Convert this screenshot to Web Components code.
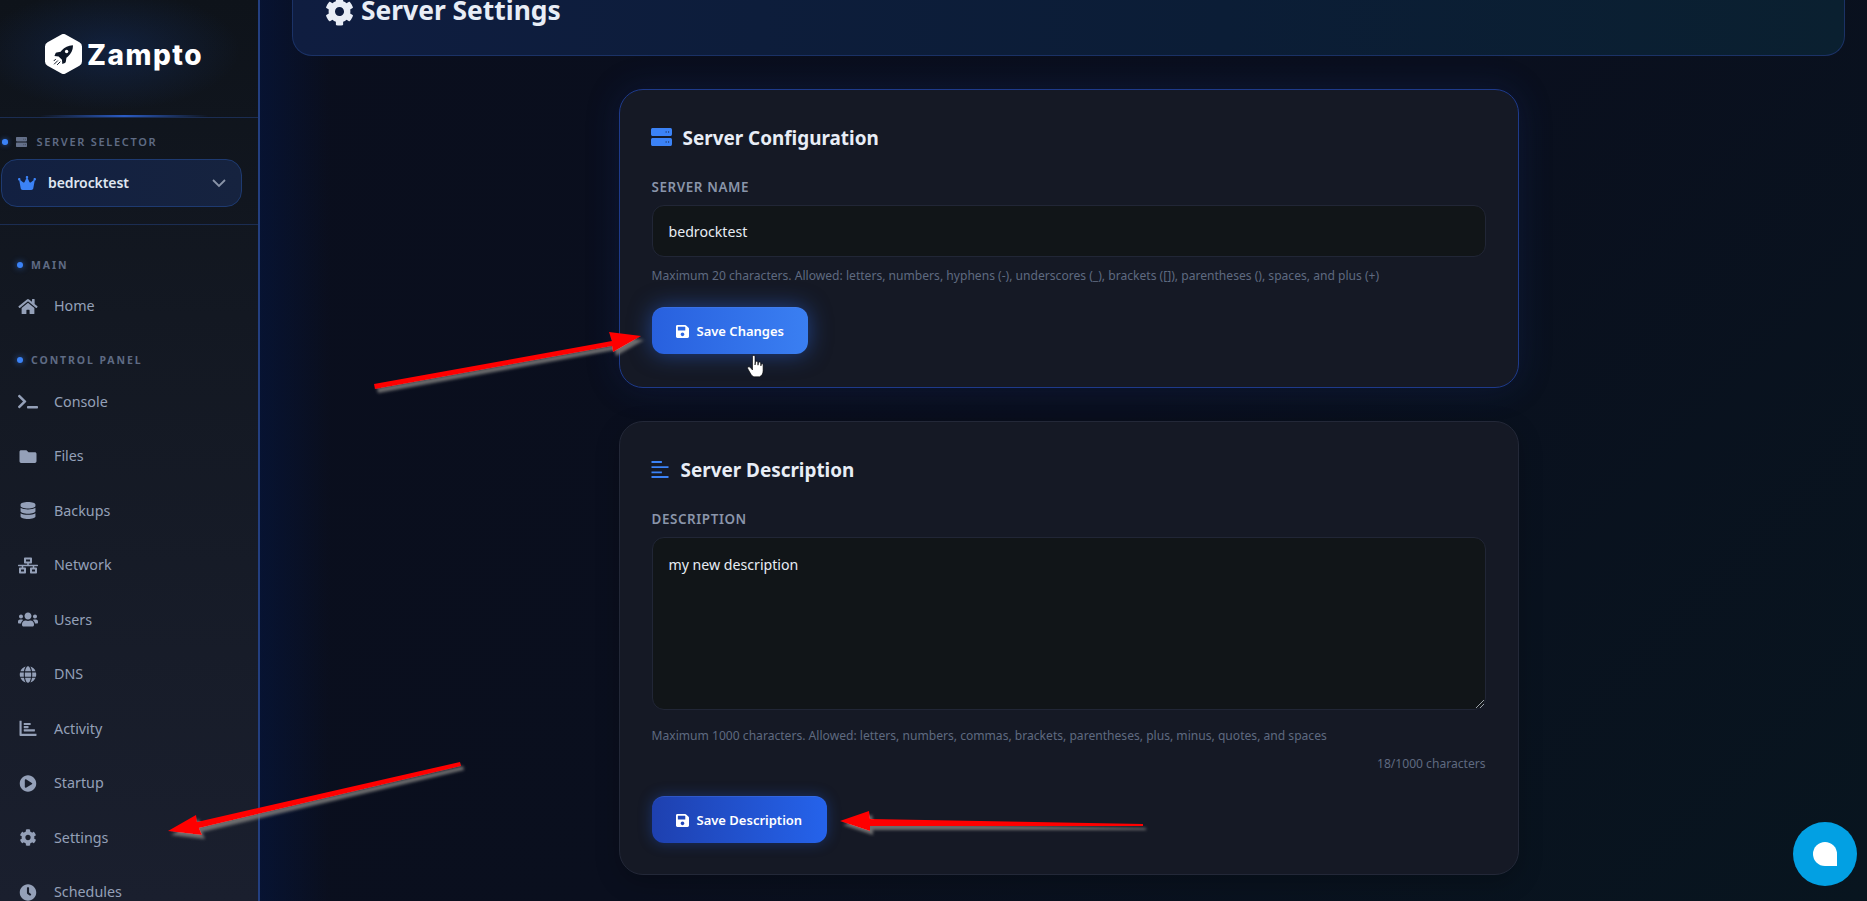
<!DOCTYPE html>
<html lang="en">
<head>
<meta charset="utf-8">
<title>Server Settings</title>
<style>
html,body{margin:0;padding:0;height:901px;overflow:hidden;background:#0a0f1c;font-family:"Noto Sans","Open Sans",sans-serif;}
</style>
</head>
<body>
<app-shell>
  <side-bar>
    <brand-logo></brand-logo>
    <server-picker name="bedrocktest"></server-picker>
    <nav-section label="MAIN" first>
      <nav-item icon="home">Home</nav-item>
    </nav-section>
    <nav-section label="CONTROL PANEL">
      <nav-item icon="terminal">Console</nav-item>
      <nav-item icon="folder">Files</nav-item>
      <nav-item icon="database">Backups</nav-item>
      <nav-item icon="network">Network</nav-item>
      <nav-item icon="users">Users</nav-item>
      <nav-item icon="globe">DNS</nav-item>
      <nav-item icon="chart">Activity</nav-item>
      <nav-item icon="play">Startup</nav-item>
      <nav-item icon="cog">Settings</nav-item>
      <nav-item icon="clock">Schedules</nav-item>
    </nav-section>
  </side-bar>
  <main-area>
    <page-header>Server Settings</page-header>
    <settings-card heading="Server Configuration" icon="server" hovered>
      <form-label>SERVER NAME</form-label>
      <text-box>bedrocktest</text-box>
      <form-hint>Maximum 20 characters. Allowed: letters, numbers, hyphens (-), underscores (_), brackets ([]), parentheses (), spaces, and plus (+)</form-hint>
      <save-button hovered>Save Changes</save-button>
    </settings-card>
    <settings-card heading="Server Description" icon="lines">
      <form-label>DESCRIPTION</form-label>
      <text-box multiline>my new description</text-box>
      <form-hint class="after-area">Maximum 1000 characters. Allowed: letters, numbers, commas, brackets, parentheses, plus, minus, quotes, and spaces</form-hint>
      <form-hint class="count">18/1000 characters</form-hint>
      <save-button>Save Description</save-button>
    </settings-card>
  </main-area>
  <annotation-layer></annotation-layer>
  <chat-bubble></chat-bubble>
</app-shell>

<script>
const ICONS = {
  home:['0 0 576 512','M280.37 148.26L96 300.11V464a16 16 0 0 0 16 16l112.06-.29a16 16 0 0 0 15.92-16V368a16 16 0 0 1 16-16h64a16 16 0 0 1 16 16v95.64a16 16 0 0 0 16 16.05L464 480a16 16 0 0 0 16-16V300L295.67 148.26a12.19 12.19 0 0 0-15.3 0zM571.6 251.47L488 182.56V44.05a12 12 0 0 0-12-12h-56a12 12 0 0 0-12 12v72.61L318.47 43a48 48 0 0 0-61 0L4.34 251.47a12 12 0 0 0-1.6 16.9l25.5 31A12 12 0 0 0 45.15 301l235.22-193.74a12.19 12.19 0 0 1 15.3 0L530.9 301a12 12 0 0 0 16.9-1.6l25.5-31a12 12 0 0 0-1.7-16.93z'],
  terminal:['0 0 640 512','M257.981 272.971L63.638 467.314c-9.373 9.373-24.569 9.373-33.941 0L7.029 444.647c-9.357-9.357-9.375-24.522-.04-33.901L161.011 256 6.99 101.255c-9.335-9.379-9.317-24.544.04-33.901l22.667-22.667c9.373-9.373 24.569-9.373 33.941 0L257.981 239.03c9.373 9.372 9.373 24.568 0 33.941zM640 456v-32c0-13.255-10.745-24-24-24H312c-13.255 0-24 10.745-24 24v32c0 13.255 10.745 24 24 24h304c13.255 0 24-10.745 24-24z'],
  folder:['0 0 512 512','M464 128H272l-64-64H48C21.49 64 0 85.49 0 112v288c0 26.51 21.49 48 48 48h416c26.51 0 48-21.49 48-48V176c0-26.51-21.49-48-48-48z'],
  database:['0 0 448 512','M448 73.143v45.714C448 159.143 347.667 192 224 192S0 159.143 0 118.857V73.143C0 32.857 100.333 0 224 0s224 32.857 224 73.143zM448 176v102.857C448 319.143 347.667 352 224 352S0 319.143 0 278.857V176c48.125 33.143 136.208 48.572 224 48.572S399.874 209.143 448 176zm0 160v102.857C448 479.143 347.667 512 224 512S0 479.143 0 438.857V336c48.125 33.143 136.208 48.572 224 48.572S399.874 369.143 448 336z'],
  network:['0 0 640 512','M640 264v-16c0-8.84-7.16-16-16-16H344v-40h72c17.67 0 32-14.33 32-32V32c0-17.67-14.33-32-32-32H224c-17.67 0-32 14.33-32 32v128c0 17.67 14.33 32 32 32h72v40H16c-8.84 0-16 7.16-16 16v16c0 8.84 7.16 16 16 16h104v40H64c-17.67 0-32 14.33-32 32v128c0 17.67 14.33 32 32 32h160c17.67 0 32-14.33 32-32V352c0-17.67-14.33-32-32-32h-56v-40h304v40h-56c-17.67 0-32 14.33-32 32v128c0 17.67 14.33 32 32 32h160c17.67 0 32-14.33 32-32V352c0-17.67-14.33-32-32-32h-56v-40h104c8.84 0 16-7.16 16-16zM256 128V64h128v64H256zm-64 320H96v-64h96v64zm352 0h-96v-64h96v64z'],
  users:['0 0 640 512','M96 224c35.3 0 64-28.7 64-64s-28.7-64-64-64-64 28.7-64 64 28.7 64 64 64zm448 0c35.3 0 64-28.7 64-64s-28.7-64-64-64-64 28.7-64 64 28.7 64 64 64zm32 32h-64c-17.6 0-33.5 7.1-45.1 18.6 40.3 22.1 68.9 62 75.1 109.4h66c17.7 0 32-14.3 32-32v-32c0-35.3-28.7-64-64-64zm-256 0c61.9 0 112-50.1 112-112S381.9 32 320 32 208 82.1 208 144s50.1 112 112 112zm76.8 32h-8.3c-20.8 10-43.9 16-68.5 16s-47.6-6-68.5-16h-8.3C179.6 288 128 339.6 128 403.2V432c0 26.5 21.5 48 48 48h288c26.5 0 48-21.5 48-48v-28.8c0-63.6-51.6-115.2-115.2-115.2zm-223.7-13.4C161.5 263.1 145.6 256 128 256H64c-35.3 0-64 28.7-64 64v32c0 17.7 14.3 32 32 32h65.9c6.3-47.4 34.9-87.3 75.2-109.4z'],
  globe:['0 0 496 512','M336.5 160C322 70.7 287.8 8 248 8s-74 62.7-88.5 152h177zM152 256c0 22.2 1.2 43.5 3.3 64h185.3c2.1-20.5 3.3-41.8 3.3-64s-1.2-43.5-3.3-64H155.3c-2.1 20.5-3.3 41.8-3.3 64zm324.7-96c-28.6-67.9-86.5-120.4-158-141.6 24.4 33.8 41.2 84.7 50 141.6h108zM177.2 18.4C105.8 39.6 47.8 92.1 19.3 160h108c8.7-56.9 25.5-107.8 49.9-141.6zM487.4 192H372.7c2.1 21 3.3 42.5 3.3 64s-1.2 43-3.3 64h114.6c5.5-20.5 8.6-41.8 8.6-64s-3.1-43.5-8.5-64zM120 256c0-21.5 1.2-43 3.3-64H8.6C3.2 212.5 0 233.8 0 256s3.2 43.5 8.6 64h114.6c-2-21-3.2-42.5-3.2-64zm39.5 96c14.5 89.3 48.7 152 88.5 152s74-62.7 88.5-152h-177zm159.3 141.6c71.4-21.2 129.4-73.7 158-141.6h-108c-8.8 56.9-25.6 107.8-50 141.6zM19.3 352c28.6 67.9 86.5 120.4 158 141.6-24.4-33.8-41.2-84.7-50-141.6h-108z'],
  chart:['0 0 512 512','M64 32v384h436c6.6 0 12 5.4 12 12v40c0 6.6-5.4 12-12 12H24c-13.3 0-24-10.7-24-24V32c0-6.6 5.4-12 12-12h40c6.6 0 12 5.4 12 12zM128 100c0-6.6 5.4-12 12-12h184c6.6 0 12 5.4 12 12v40c0 6.6-5.4 12-12 12H140c-6.6 0-12-5.4-12-12zM128 196c0-6.6 5.4-12 12-12h120c6.6 0 12 5.4 12 12v40c0 6.6-5.4 12-12 12H140c-6.6 0-12-5.4-12-12zM128 292c0-6.6 5.4-12 12-12h312c6.6 0 12 5.4 12 12v40c0 6.6-5.4 12-12 12H140c-6.6 0-12-5.4-12-12z'],
  play:['0 0 512 512','M256 8C119 8 8 119 8 256s111 248 248 248 248-111 248-248S393 8 256 8zm115.7 272l-176 101c-15.8 8.8-35.7-2.5-35.7-21V152c0-18.4 19.8-29.8 35.7-21l176 107c16.4 9.2 16.4 32.9 0 42z'],
  cog:['0 0 512 512','M487.4 315.7l-42.6-24.6c4.3-23.2 4.3-47 0-70.2l42.6-24.6c4.9-2.8 7.1-8.6 5.5-14-11.1-35.6-30-67.8-54.7-94.6-3.8-4.1-10-5.1-14.8-2.3L380.8 110c-17.9-15.4-38.5-27.3-60.8-35.1V25.8c0-5.6-3.9-10.5-9.4-11.7-36.7-8.2-74.3-7.8-109.2 0-5.5 1.2-9.4 6.1-9.4 11.7V75c-22.2 7.9-42.8 19.8-60.8 35.1L88.7 85.5c-4.9-2.8-11-1.9-14.8 2.3-24.7 26.7-43.6 58.9-54.7 94.6-1.7 5.4.6 11.2 5.5 14L67.3 221c-4.3 23.2-4.3 47 0 70.2l-42.6 24.6c-4.9 2.8-7.1 8.6-5.5 14 11.1 35.6 30 67.8 54.7 94.6 3.8 4.1 10 5.1 14.8 2.3l42.6-24.6c17.9 15.4 38.5 27.3 60.8 35.1v49.2c0 5.6 3.9 10.5 9.4 11.7 36.7 8.2 74.3 7.8 109.2 0 5.5-1.2 9.4-6.1 9.4-11.7v-49.2c22.2-7.9 42.8-19.8 60.8-35.1l42.6 24.6c4.9 2.8 11 1.9 14.8-2.3 24.7-26.7 43.6-58.9 54.7-94.6 1.5-5.5-.7-11.3-5.6-14.1zM256 336c-44.1 0-80-35.9-80-80s35.9-80 80-80 80 35.9 80 80-35.9 80-80 80z'],
  clock:['0 0 512 512','M256,8C119,8,8,119,8,256S119,504,256,504,504,393,504,256,393,8,256,8Zm92.49,313h0l-20,25a16,16,0,0,1-22.49,2.5h0l-67-49.72a40,40,0,0,1-15-31.23V112a16,16,0,0,1,16-16h32a16,16,0,0,1,16,16V256l58,42.5A16,16,0,0,1,348.49,321Z'],
  server:['0 32 512 288','M480 160H32c-17.673 0-32-14.327-32-32V64c0-17.673 14.327-32 32-32h448c17.673 0 32 14.327 32 32v64c0 17.673-14.327 32-32 32zm-48-76c-6.6 0-12 5.400-12 12s5.400 12 12 12 12-5.400 12-12-5.400-12-12-12zm-64 0c-6.600 0-12 5.400-12 12s5.400 12 12 12 12-5.400 12-12-5.400-12-12-12zm112 236H32c-17.673 0-32-14.327-32-32v-64c0-17.673 14.327-32 32-32h448c17.673 0 32 14.327 32 32v64c0 17.673-14.327 32-32 32zm-48-76c-6.600 0-12 5.400-12 12s5.400 12 12 12 12-5.400 12-12-5.400-12-12-12zm-64 0c-6.600 0-12 5.400-12 12s5.400 12 12 12 12-5.400 12-12-5.400-12-12-12z'],
  save:['0 0 448 512','M433.941 129.941l-83.882-83.882A48 48 0 0 0 316.118 32H48C21.49 32 0 53.49 0 80v352c0 26.51 21.49 48 48 48h352c26.51 0 48-21.49 48-48V163.882a48 48 0 0 0-14.059-33.941zM224 416c-35.346 0-64-28.654-64-64 0-35.346 28.654-64 64-64s64 28.654 64 64c0 35.346-28.654 64-64 64zm96-304.52V212c0 6.627-5.373 12-12 12H76c-6.627 0-12-5.373-12-12V108c0-6.627 5.373-12 12-12h228.52c3.183 0 6.235 1.264 8.485 3.515l3.48 3.48A11.996 11.996 0 0 1 320 111.48z'],
  crown:['0 32 576 448','M309 106c11.4-7 19-19.7 19-34c0-22.1-17.9-40-40-40s-40 17.900-40 40c0 14.4 7.6 27 19 34L209.700 220.600c-9.100 18.200-32.700 23.400-48.600 10.700L72 160c5-6.700 8-15 8-24c0-22.100-17.900-40-40-40S0 113.900 0 136s17.900 40 40 40c.2 0 .5 0 .7 0L86.400 427.400c5.500 30.400 32 52.600 63 52.600H426.600c30.900 0 57.400-22.100 63-52.600L535.300 176c.2 0 .5 0 .7 0c22.100 0 40-17.900 40-40s-17.900-40-40-40s-40 17.900-40 40c0 9 3 17.300 8 24l-89.100 71.300c-15.900 12.700-39.500 7.500-48.600-10.700L309 106z'],
  lines:['0 0 18 18','M0 0h11v2H0zM0 5.500h18v2H0zM0 11h11v2H0zM0 16h18v2H0z']
};
function icon(name, w, h, color){
  const [vb,d]=ICONS[name];
  const par = name==='server' ? ' preserveAspectRatio="none"' : '';
  return `<svg viewBox="${vb}"${par} width="${w}" height="${h}" fill="${color||'currentColor'}" style="display:block;flex:none" aria-hidden="true"><path d="${d}"/></svg>`;
}
function def(tag, css, html){
  customElements.define(tag, class extends HTMLElement{
    connectedCallback(){
      if(this.shadowRoot) return;
      const r=this.attachShadow({mode:'open'});
      r.innerHTML=`<style>${css}</style>`+(typeof html==='function'?html(this):html);
    }
  });
}

def('app-shell',`:host{display:flex;width:1867px;height:901px;overflow:hidden;position:relative;color:#e2e8f0;
  background:
   linear-gradient(90deg,rgba(4,24,72,.48) 260px,rgba(4,24,72,0) 330px),
   linear-gradient(135deg,#0a0e1d 0%,#0a0f1e 55%,#08151f 100%);}`,`<slot></slot>`);

def('side-bar',`:host{display:flex;flex-direction:column;flex:none;width:260px;height:901px;box-sizing:border-box;overflow:hidden;
  border-right:2px solid #233f80;background:linear-gradient(180deg,#0e131a 0%,#131822 35%,#1a1f2e 100%);}`,`<slot></slot>`);

def('brand-logo',`:host{display:flex;align-items:center;justify-content:flex-start;flex:none;height:118px;box-sizing:border-box;padding:0 0 9px 45px;gap:5px;position:relative;
  border-bottom:1px solid #1b2d52;background:radial-gradient(ellipse 130px 60px at 110px 50px,rgba(22,52,110,.42),rgba(22,52,110,0));}
 :host::after{content:"";position:absolute;left:40px;right:50px;bottom:0;height:2px;background:linear-gradient(90deg,transparent,#2a5bc4,transparent);}
 span{font:800 28px/1 "Inter","Lato",sans-serif;color:#fff;letter-spacing:1.5px;margin-top:2px}`,
 `<svg viewBox="0 0 37 40" width="37" height="40" style="display:block;flex:none" aria-hidden="true">
   <path d="M18.5 5L32 12.600V27.400L18.5 35L5 27.400V12.600Z" fill="#fff" stroke="#fff" stroke-width="10" stroke-linejoin="round"/>
   <g transform="translate(2 2.300) scale(.9)">
   <path d="M28.5 10c-4.8.1-9 2.2-12 5.6l-1.4 1.7-4.4.7c-.6.1-1.1.5-1.3 1L8.300 22l4.600.4 3.700 3.700.4 4.600 2.900-1.100c.5-.2.9-.7 1-1.300l.7-4.400 1.700-1.400c3.400-3 5.500-7.200 5.600-12z" fill="#0d1626"/>
   <circle cx="21.800" cy="16.800" r="1.900" fill="#fff"/>
   <path d="M9.500 25.500l-1.700 1.700M11.800 27.200l-3.600 3.600M14.500 28.500l-3 3" stroke="#0d1626" stroke-width="1.100" stroke-linecap="round"/>
   </g>
  </svg><span>Zampto</span>`);

def('server-picker',`:host{display:block;flex:none;height:107px;box-sizing:border-box;border-bottom:1px solid #1b2d52;padding:16px 0 0 1px;}
 .lab{display:flex;align-items:center;height:16px;color:#5f6b84;font:600 11px/16px "Noto Sans",sans-serif;letter-spacing:1.700px;}
 .dot{width:5.500px;height:5.500px;border-radius:50%;background:#3b82f6;margin-left:1px;margin-right:8px;box-shadow:0 0 5px rgba(59,130,246,.6)}
 .lab svg{margin-right:10px}
 .box{display:flex;align-items:center;margin-top:9px;width:241px;height:48px;box-sizing:border-box;border:1px solid #1e3a70;border-radius:16px;padding:0 15px 0 16px;
   background:linear-gradient(90deg,#122041,#16233f);}
 b{font:600 14px/1 "Noto Sans",sans-serif;letter-spacing:-.1px;color:#dfe6f0;margin-left:12px;flex:1}`,
 el=>`<div class="lab"><i class="dot"></i>${icon('server',11,10,'#64708a')}SERVER SELECTOR</div>
  <div class="box">${icon('crown',18,14,'#3b82f6')}<b>${el.getAttribute('name')}</b>
  <svg width="14" height="9" viewBox="0 0 14 9" fill="none" stroke="#8a94a8" stroke-width="1.800" aria-hidden="true"><path d="M1 1l6 6 6-6"/></svg></div>`);

def('nav-section',`:host{display:block;flex:none;padding-top:19.500px}
 :host([first]){padding-top:33px}
 .lab{display:flex;align-items:center;height:14px;padding-left:17px;margin-bottom:7.500px;color:#5f6b84;font:700 10.500px/14px "Noto Sans",sans-serif;letter-spacing:1.900px}
 :host([first]) .lab{margin-bottom:7px}
 .dot{width:6px;height:6px;border-radius:50%;background:#3b82f6;margin-right:8px;box-shadow:0 0 6px rgba(59,130,246,.7)}`,
 el=>`<div class="lab"><i class="dot"></i>${el.getAttribute('label')}</div><slot></slot>`);

def('nav-item',`:host{display:flex;align-items:center;height:54.500px;color:#94a0b8;font:400 14.300px/1 "Noto Sans",sans-serif;}
 .ic{display:flex;justify-content:center;align-items:center;width:20px;margin-left:18px;margin-right:16px;}`,
 el=>`<div class="ic">${icon(el.getAttribute('icon'),20,17)}</div><slot></slot>`);

def('main-area',`:host{display:block;flex:1;min-width:0;padding:0 22px 0 32px;box-sizing:border-box}`,`<slot></slot>`);

def('page-header',`:host{display:flex;align-items:center;height:56px;box-sizing:border-box;padding:0 0 34px 32px;gap:7px;
  border:1px solid #1b3266;border-top:0;border-radius:0 0 20px 20px;color:#e8edf6;font:700 26.400px/1 "Noto Sans",sans-serif;
  background:linear-gradient(90deg,#0f1d40 0%,#0b1d36 60%,#0a2030 100%);}
  svg{margin-top:2px}`,
 el=>`${icon('cog',29,29)}<slot></slot>`);

def('settings-card',`:host{display:block;width:900px;margin:33px auto 0;box-sizing:border-box;border:1px solid #232838;border-radius:24px;padding:31px 32px 31px;background:#151925;box-shadow:0 8px 24px rgba(0,0,0,.22)}
 :host([hovered]){border-color:#1e3a8a;padding-bottom:33px;box-shadow:0 0 34px rgba(20,50,130,.24)}
 h2{display:flex;align-items:center;gap:12px;height:34px;margin:0 0 23px;font:700 18.900px/1 "Noto Sans",sans-serif;color:#e8edf6}
 h2 svg{margin:-2px 0 0 -1px}
 :host([icon=server]) h2 svg{margin-right:-1px}`,
 el=>`<h2>${el.getAttribute('icon')==='server'?icon('server',21,18,'#3b82f6'):icon('lines',18,17,'#3b82f6')}${el.getAttribute('heading')}</h2><slot></slot>`);

def('form-label',`:host{display:block;height:18px;margin-bottom:9px;font:600 13.400px/18px "Noto Sans",sans-serif;letter-spacing:.6px;color:#8a95aa}`,`<slot></slot>`);

def('text-box',`:host{display:block;position:relative;box-sizing:border-box;height:52px;border:1px solid #212636;border-radius:12px;background:#111518;color:#e8edf4;padding:0 16px;font:400 14.150px/52px "Noto Sans",sans-serif}
 :host([multiline]){height:173px;line-height:1;padding-top:20px}
 svg{position:absolute;right:1px;bottom:1px;display:none}
 :host([multiline]) svg{display:block}`,
 `<slot></slot><svg width="8" height="8" viewBox="0 0 8 8" stroke="#9aa0a8" stroke-width="1" aria-hidden="true"><path d="M0 8L8 0M4 8L8 4"/></svg>`);

def('form-hint',`:host{display:block;height:18px;margin-top:10px;font:400 12.100px/18px "Noto Sans",sans-serif;color:#5f6a80}
 :host(.after-area){margin-top:17px}
 :host(.count){margin-top:9.500px;text-align:right}`,`<slot></slot>`);

def('save-button',`:host{display:flex;width:fit-content;align-items:center;gap:8px;height:47px;box-sizing:border-box;margin-top:23.500px;padding:0 25px 0 24px;border-radius:12px;color:#fff;font:600 13px/1 "Noto Sans",sans-serif;
   background:linear-gradient(90deg,#1e40af,#2563eb);box-shadow:0 0 14px rgba(37,99,235,.35);border-top:1px solid rgba(96,140,240,.25)}
 :host([hovered]){margin-top:22px;padding-right:24px;background:linear-gradient(90deg,#2860de,#3a7ff2);box-shadow:0 0 22px rgba(47,109,235,.5)}`,
 `${icon('save',13,15,'#fff')}<slot></slot>`);

def('chat-bubble',`:host{position:absolute;left:1793px;top:822px;width:64px;height:64px;border-radius:50%;background:#02a0e3;display:flex;align-items:center;justify-content:center}
 i{display:block;width:24px;height:24px;background:#fff;border-radius:50% 50% 0 50%}`,`<i></i>`);

def('annotation-layer',`:host{position:absolute;left:0;top:0;width:1867px;height:901px;pointer-events:none}
 svg{display:block}`,
 `<svg width="1867" height="901" viewBox="0 0 1867 901" aria-hidden="true">
   <defs><filter id="sh" x="-10%" y="-50%" width="120%" height="200%"><feDropShadow dx="3" dy="4" stdDeviation="1.500" flood-color="#777" flood-opacity=".9"/></filter></defs>
   <g fill="#ff0000" filter="url(#sh)">
     <polygon points="374,384 612,341 609,332 641,336 613,352 612,346 375,389"/>
     <polygon points="168,831 196,815 197,822 460,762 461,766 199,828 202,835"/>
     <polygon points="840,821 869,811 870,819 1143,824 1143,826 870,826 870,831"/>
   </g>
   <path d="M752.500 356.500c0-1.500 2.500-1.500 2.500 0v8.500l.5-3c.3-1 2-1 2.200.2l.3 3 .5-2.500c.3-1 2-1 2.100.2l.3 3 .4-1.500c.3-1 1.800-.8 1.800.4v6c0 3-1.500 5-3.500 6h-5c-2 0-3-1.500-4.500-4l-2.300-4c-.8-1.600 1-2.800 2.200-1.600l2.500 2.800z" fill="#fff" stroke="#000" stroke-width=".6"/>
 </svg>`);
</script>
</body>
</html>
